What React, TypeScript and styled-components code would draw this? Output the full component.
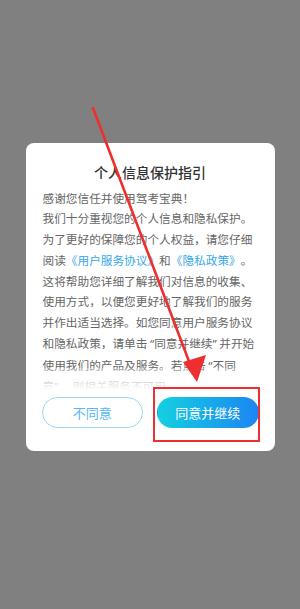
import React from "react";
import styled, { createGlobalStyle } from "styled-components";

const GlobalStyle = createGlobalStyle`
    html, body {
        margin: 0;
        padding: 0;
        background: #808080;
    }
    body {
        font-family: "Noto Sans CJK SC", "Noto Sans", sans-serif;
    }
`;

const Page = styled.div`
    position: relative;
    width: 300px;
    height: 609px;
    overflow: hidden;
    background: #808080;
    display: flex;
    justify-content: center;
    align-items: flex-start;
    padding-top: 143px;
    box-sizing: border-box;
`;

const Card = styled.div`
    width: 249px;
    background: #fff;
    border-radius: 8px;
    padding: 19px 0 23px;
    box-sizing: border-box;
    display: flex;
    flex-direction: column;
`;

const Title = styled.h2`
    margin: 0 0 5.5px;
    font-size: 14px;
    line-height: 20px;
    font-weight: 500;
    color: #333;
    text-align: center;
`;

const Body = styled.div`
    position: relative;
    height: 202px;
    overflow: hidden;
    padding-left: 17px;
    font-size: 11.67px;
    line-height: 20.75px;
    color: #666;
    text-spacing-trim: space-all;

    &::after {
        content: "";
        position: absolute;
        left: 0;
        right: 0;
        bottom: 0;
        height: 22px;
        background: linear-gradient(rgba(255, 255, 255, 0.3), #fff);
    }
`;

const Line = styled.span`
    display: block;
    white-space: nowrap;
`;

const Link = styled.span`
    color: #36a7ea;
`;

// full-width CJK punctuation kept at one em so it is never trimmed
const Punct = styled.span<{ $open?: boolean }>`
    display: inline-block;
    width: 1em;
    text-align: ${(p) => (p.$open ? "right" : "left")};
`;

const Quote = styled.span<{ $open?: boolean }>`
    display: inline-block;
    width: 0.58em;
    font-family: "Noto Sans", sans-serif;
    text-align: ${(p) => (p.$open ? "right" : "left")};
`;

const Buttons = styled.div`
    display: flex;
    gap: 14px;
    margin-top: 7px;
    padding: 0 16px;
`;

const Button = styled.button<{ $primary?: boolean }>`
    flex: 1;
    height: 31px;
    border-radius: 16px;
    font-family: inherit;
    font-size: 13px;
    padding: 0;
    border: 1px solid ${(p) => (p.$primary ? "transparent" : "#9ed7f5")};
    color: ${(p) => (p.$primary ? "#fff" : "#55baf0")};
    background: ${(p) =>
        p.$primary ? "linear-gradient(90deg, #14d0e0, #1c86f2)" : "#fff"};
`;

const Highlight = styled.div`
    position: absolute;
    left: 153px;
    top: 387px;
    width: 107px;
    height: 55px;
    border: 2px solid #ee2f2f;
    box-sizing: border-box;
`;

const Arrow = styled.svg`
    position: absolute;
    left: 0;
    top: 0;
    pointer-events: none;
`;

export default function App() {
    return (
        <>
            <GlobalStyle />
            <Page>
                <Card>
                    <Title>个人信息保护指引</Title>
                    <Body>
                        <Line>感谢您信任并使用驾考宝典！</Line>
                        <Line>我们十分重视您的个人信息和隐私保护。</Line>
                        <Line>为了更好的保障您的个人权益，请您仔细</Line>
                        <Line>
                            阅读
                            <Link>
                                <Punct $open>《</Punct>用户服务协议<Punct>》</Punct>
                            </Link>
                            和
                            <Link>
                                <Punct $open>《</Punct>隐私政策<Punct>》</Punct>
                            </Link>
                            <Punct>。</Punct>
                        </Line>
                        <Line>这将帮助您详细了解我们对信息的收集、</Line>
                        <Line>使用方式，以便您更好地了解我们的服务</Line>
                        <Line>并作出适当选择。如您同意用户服务协议</Line>
                        <Line>
                            和隐私政策，请单击<Quote $open>“</Quote>同意并继续
                            <Quote>”</Quote>并开始
                        </Line>
                        <Line>
                            使用我们的产品及服务。若点击<Quote $open>“</Quote>不同
                        </Line>
                        <Line>
                            意<Quote>”</Quote>，则相关服务不可用。
                        </Line>
                    </Body>
                    <Buttons>
                        <Button>不同意</Button>
                        <Button $primary>同意并继续</Button>
                    </Buttons>
                </Card>
                <Highlight />
                <Arrow width="300" height="609" viewBox="0 0 300 609">
                    <line
                        x1="93"
                        y1="108"
                        x2="190"
                        y2="364"
                        stroke="#ee2f2f"
                        strokeWidth="2.6"
                        strokeLinecap="round"
                    />
                    <polygon points="197,382 183,362 206,355" fill="#ee2f2f" />
                </Arrow>
            </Page>
        </>
    );
}
